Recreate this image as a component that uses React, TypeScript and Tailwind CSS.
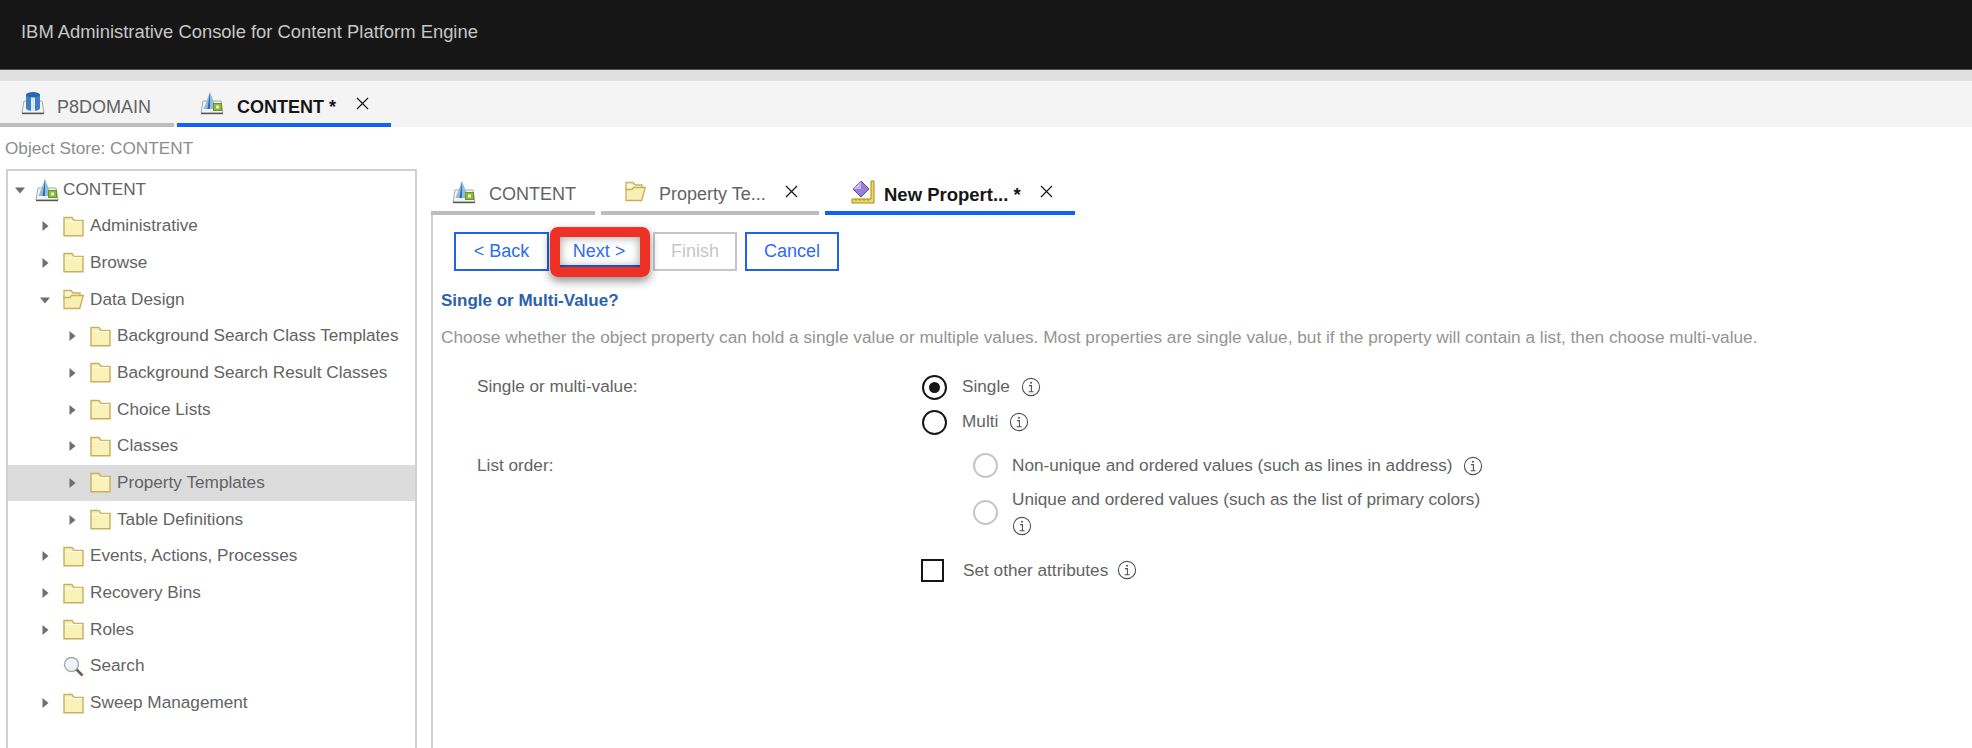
import React from "react";

const FONT = "font-['Liberation_Sans',Arial,sans-serif]";

const Folder = ({ open = false }: { open?: boolean }) => (
  <svg width="21" height="21" viewBox="0 0 21 21" className="shrink-0">
    {open ? (
      <>
        <path d="M1 1.5h7l2 2.5h7v5H1z" fill="#fbf6cc" stroke="#c9ae5e" strokeWidth="1.3" />
        <path d="M1 19.5V8.5h6l1.5-2h11.8l-3.6 13z" fill="#f7efb4" stroke="#c9ae5e" strokeWidth="1.3" />
      </>
    ) : (
      <>
        <path d="M1 1.5h8l2 3h9v15.2H1z" fill="#f8f1b8" stroke="#c9ae5e" strokeWidth="1.4" />
        <path d="M2 5.5h17" stroke="#fdfbe6" strokeWidth="1.2" />
      </>
    )}
  </svg>
);

const Tray = () => (
  <>
    <path d="M3 10h18l2 12H1z" fill="#f4f4f4" stroke="#a8a8a8" />
    <path d="M1 22.5h22" stroke="#555" strokeWidth="1.4" />
  </>
);

const Store = () => (
  <svg width="24" height="24" viewBox="0 0 24 24" className="shrink-0">
    <Tray />
    <path d="M10 1L3.5 18h13z" fill="#8fbde3" />
    <path d="M10 1v17h-2.5z" fill="#2f6ea8" />
    <rect x="13.5" y="12.5" width="8" height="7" fill="#8dbb3c" stroke="#6b9326" />
    <rect x="16" y="14.5" width="3" height="3" fill="#e9f4cf" />
  </svg>
);

const Domain = () => (
  <svg width="24" height="24" viewBox="0 0 24 24" className="shrink-0">
    <Tray />
    <path d="M5 4c0-4 14-4 14 0v13c0 4-14 4-14 0z" fill="#3f7fc4" />
    <path d="M10 5h4v15h-4z" fill="#d7e8f8" />
    <ellipse cx="12" cy="4" rx="7" ry="2.6" fill="#2a67ad" />
  </svg>
);

const Template = () => (
  <svg width="24" height="24" viewBox="0 0 24 24" className="shrink-0">
    <path d="M20 1h3v22H1v-4h19z" fill="#efd95a" stroke="#a18f1e" />
    <path d="M5 21v-2M9 21v-2M13 21v-2M17 21v-2" stroke="#a18f1e" />
    <path d="M10 1l8 8-8 8-8-8z" fill="#9a7fd8" stroke="#5e43a5" />
    <path d="M10 1v8H2z" fill="#c7b6ef" />
  </svg>
);

const Search = () => (
  <svg width="21" height="21" viewBox="0 0 21 21" className="shrink-0">
    <circle cx="8.5" cy="8.5" r="7" fill="#eef3f8" stroke="#a8a8a8" strokeWidth="1.4" />
    <path d="M13.5 13.5l6 6" stroke="#7d5a48" strokeWidth="2.6" />
  </svg>
);

const Caret = ({ open = false }: { open?: boolean }) => (
  <svg width="12" height="12" viewBox="0 0 12 12" className="shrink-0">
    {open ? <path d="M1 3.5h10l-5 6z" fill="#6f6f6f" /> : <path d="M3.5 1v10l6-5z" fill="#6f6f6f" />}
  </svg>
);

const Info = () => (
  <svg width="20" height="20" viewBox="0 0 20 20" className="shrink-0">
    <circle cx="10" cy="10" r="8.6" fill="none" stroke="#525252" strokeWidth="1.1" />
    <circle cx="10" cy="5.8" r="1" fill="#525252" />
    <path d="M8 8.6h2.4v6M7.6 14.8h5" fill="none" stroke="#525252" strokeWidth="1.1" />
  </svg>
);

const Close = () => (
  <svg width="13" height="13" viewBox="0 0 13 13" className="shrink-0">
    <path d="M1 1l11 11M12 1L1 12" stroke="#161616" strokeWidth="1.2" />
  </svg>
);

type Row = {
  label: string;
  level: number;
  open?: boolean;
  selected?: boolean;
  search?: boolean;
};

const rows: Row[] = [
  { label: "Administrative", level: 1 },
  { label: "Browse", level: 1 },
  { label: "Data Design", level: 1, open: true },
  { label: "Background Search Class Templates", level: 2 },
  { label: "Background Search Result Classes", level: 2 },
  { label: "Choice Lists", level: 2 },
  { label: "Classes", level: 2 },
  { label: "Property Templates", level: 2, selected: true },
  { label: "Table Definitions", level: 2 },
  { label: "Events, Actions, Processes", level: 1 },
  { label: "Recovery Bins", level: 1 },
  { label: "Roles", level: 1 },
  { label: "Search", level: 1, search: true },
  { label: "Sweep Management", level: 1 },
];

const Radio = ({ checked = false, disabled = false }: { checked?: boolean; disabled?: boolean }) => (
  <span
    className={`flex h-[25px] w-[25px] shrink-0 items-center justify-center rounded-full border-2 ${
      disabled ? "border-[#c6c6c6]" : "border-[#161616]"
    }`}
  >
    {checked && <span className="h-[11px] w-[11px] rounded-full bg-[#161616]" />}
  </span>
);

export default function App() {
  return (
    <div className={`flex h-[748px] w-[1972px] flex-col overflow-hidden bg-white text-[17.2px] text-[#636363] ${FONT}`}>
      {/* Banner */}
      <header className="flex h-[70px] shrink-0 items-center border-b border-[#555] bg-[#161616] pb-[5px] pl-[21px] text-[18.4px] text-[#c6c6c6]">
        IBM Administrative Console for Content Platform Engine
      </header>
      <div className="h-[11px] shrink-0 bg-[#e0e0e0]" />

      {/* Domain tabs */}
      <div className="flex h-[46px] shrink-0 gap-[3px] bg-[#f4f4f4] text-[18px]">
        <div className="flex w-[174px] items-center border-b-4 border-[#bdbdbd] pl-[21px] pt-[2px]">
          <Domain />
          <span className="ml-[12px] mt-[8px]">P8DOMAIN</span>
        </div>
        <div className="flex w-[214px] items-center border-b-4 border-[#0f62fe] pl-[23px] pt-[2px]">
          <Store />
          <span className="ml-[13px] mt-[8px] font-bold text-[#161616]">CONTENT *</span>
          <span className="ml-[20px]">
            <Close />
          </span>
        </div>
      </div>

      <div className="px-[5px] pt-[9px] text-[#8d8d8d]">Object Store: CONTENT</div>

      <div className="flex min-h-0 flex-1 pt-[7px]">
        {/* Tree */}
        <aside className="ml-[6px] w-[411px] shrink-0 border-2 border-b-0 border-[#d0d0d0] pt-[1px]">
          <div className="flex h-[36px] items-center pl-[6px]">
            <Caret open />
            <span className="ml-[9px]">
              <Store />
            </span>
            <span className="ml-[4px]">CONTENT</span>
          </div>
          {rows.map((row) => (
            <div
              key={row.label}
              className={`flex h-[36.7px] items-center ${row.selected ? "bg-[#dcdcdc]" : ""} ${
                row.level === 2 ? "pl-[58px]" : "pl-[31px]"
              }`}
            >
              {row.search ? <span className="w-[12px]" /> : <Caret open={row.open} />}
              <span className="ml-[12px]">{row.search ? <Search /> : <Folder open={row.open} />}</span>
              <span className="ml-[6px]">{row.label}</span>
            </div>
          ))}
        </aside>

        {/* Wizard */}
        <main className="ml-[14px] flex min-w-0 flex-1 flex-col">
          <div className="flex h-[46px] shrink-0 gap-[6px] text-[18px]">
            <div className="flex w-[164px] items-center border-b-4 border-[#bdbdbd] pl-[21px] pt-[4px]">
              <Store />
              <span className="ml-[13px] mt-[6px]">CONTENT</span>
            </div>
            <div className="flex w-[218px] items-center border-b-4 border-[#bdbdbd] pl-[24px] pt-[4px]">
              <Folder open />
              <span className="ml-[13px] mt-[6px]">Property Te...</span>
              <span className="ml-[19px]">
                <Close />
              </span>
            </div>
            <div className="flex w-[250px] items-center border-b-4 border-[#0f62fe] pl-[26px] pt-[4px]">
              <Template />
              <span className="ml-[9px] mt-[6px] text-[18.5px] font-bold text-[#161616]">New Propert... *</span>
              <span className="ml-[19px]">
                <Close />
              </span>
            </div>
          </div>

          <div className="flex-1 border-l-2 border-[#d0d0d0] pl-[8px] pt-[17px]">
            <div className="flex items-center pl-[13px] text-[18px]">
              <button className="h-[39px] w-[95px] border-2 border-[#1f62f0] text-[#2f6bf0]">&lt; Back</button>
              <span className="relative ml-[8px]">
                <button className="h-[39px] w-[84px] bg-white text-[#2f6bf0]">Next &gt;</button>
                <span className="absolute -bottom-[6px] -left-[7px] -right-[9px] -top-[5px] rounded-[8px] border-[10px] border-[#ee3124] shadow-[0_4px_10px_rgba(0,0,0,0.45),inset_0_0_10px_rgba(0,0,0,0.4),inset_0_-2px_0_#1f62f0]" />
              </span>
              <button className="ml-[12px] h-[39px] w-[84px] border-2 border-[#c6c6c6] text-[#c6c6c6]">Finish</button>
              <button className="ml-[8px] h-[39px] w-[94px] border-2 border-[#1f62f0] text-[#2f6bf0]">Cancel</button>
            </div>

            <h2 className="mt-[20px] text-[17px] font-bold leading-[20px] text-[#2b5fb0]">Single or Multi-Value?</h2>
            <p className="mt-[16px] text-[17.25px] leading-[20px] text-[#949494]">
              Choose whether the object property can hold a single value or multiple values. Most properties are single
              value, but if the property will contain a list, then choose multi-value.
            </p>

            <div className="mt-[23px] grid grid-cols-[445px_1fr] pl-[36px]">
              <div className="pt-[4px]">Single or multi-value:</div>
              <div>
                <div className="flex h-[35px] items-center">
                  <Radio checked />
                  <span className="ml-[15px]">Single</span>
                  <span className="ml-[11px]">
                    <Info />
                  </span>
                </div>
                <div className="flex h-[35px] items-center">
                  <Radio />
                  <span className="ml-[15px]">Multi</span>
                  <span className="ml-[11px]">
                    <Info />
                  </span>
                </div>
              </div>

              <div className="pt-[13px]">List order:</div>
              <div className="pl-[51px] pt-[8px]">
                <div className="flex h-[36px] items-center">
                  <Radio disabled />
                  <span className="ml-[14px]">Non-unique and ordered values (such as lines in address)</span>
                  <span className="ml-[11px]">
                    <Info />
                  </span>
                </div>
                <div className="mt-[3px] flex items-center">
                  <span className="mt-[3px]">
                    <Radio disabled />
                  </span>
                  <div className="ml-[14px]">
                    <div>Unique and ordered values (such as the list of primary colors)</div>
                    <div className="mt-[3px]">
                      <Info />
                    </div>
                  </div>
                </div>
              </div>

              <div />
              <div className="mt-[22px] flex items-center">
                <span className="-ml-[1px] h-[23px] w-[23px] shrink-0 border-2 border-[#161616]" />
                <span className="ml-[19px]">Set other attributes</span>
                <span className="ml-[9px]">
                  <Info />
                </span>
              </div>
            </div>
          </div>
        </main>
      </div>
    </div>
  );
}
